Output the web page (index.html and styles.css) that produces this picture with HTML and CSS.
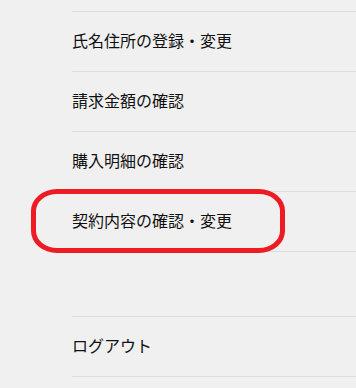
FILE: index.html
```html
<!DOCTYPE html>
<html lang="ja">
<head>
    <meta charset="UTF-8">
    <meta name="viewport" content="width=device-width, initial-scale=1.0">
    <title>メニュー</title>
    <link rel="stylesheet" href="styles.css">
</head>
<body>
    <ul class="menu">
        <li class="item">氏名住所の登録・変更</li>
        <li class="item">請求金額の確認</li>
        <li class="item">購入明細の確認</li>
        <li class="item marked">契約内容の確認・変更<span class="circle"></span></li>
        <li class="spacer"></li>
        <li class="item last">ログアウト</li>
    </ul>
</body>
</html>
```

FILE: styles.css
```css
body{
    margin: 0;
    background-color: #f0f0f0;
    font-family: "Noto Sans CJK JP", "Liberation Sans", sans-serif;
    color: #111;
}
.menu{
    list-style: none;
    margin: 11px 0 0 72px;
    padding: 0;
}
.item{
    height: 55px;
    padding-bottom: 4px;
    border-top: 1px solid #dcdcdc;
    display: flex;
    align-items: center;
    font-size: 16px;
}
.last{
    border-bottom: 1px solid #dcdcdc;
}
.spacer{
    height: 64px;
    border-top: 1px solid #dcdcdc;
}
.marked{
    position: relative;
}
.circle{
    position: absolute;
    left: -41px;
    top: -3px;
    width: 244px;
    height: 54px;
    border: 5px solid #ed1c24;
    border-radius: 26px / 22px;
}
```
